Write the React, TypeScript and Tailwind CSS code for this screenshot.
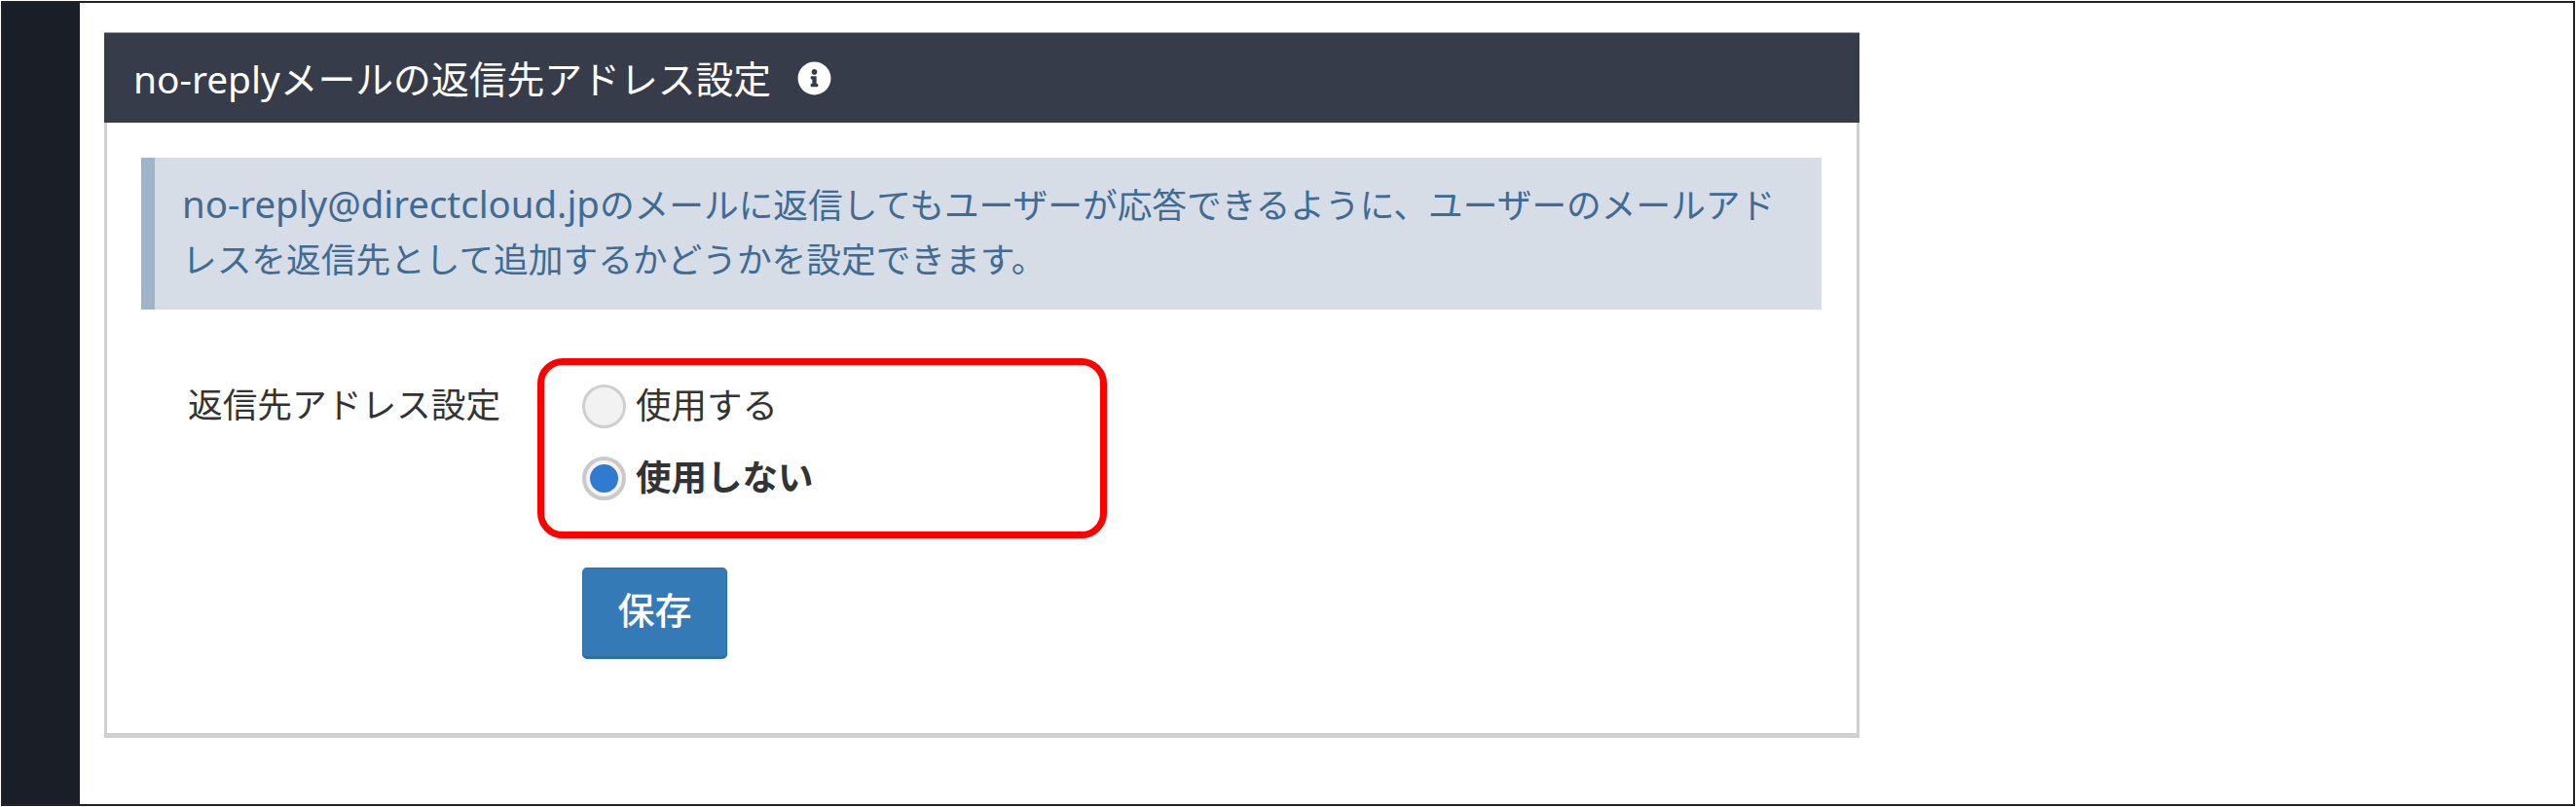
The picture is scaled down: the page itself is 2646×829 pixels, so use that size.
import React from "react";
import { FaInfoCircle } from "react-icons/fa";

function Radio({ checked, label }: { checked?: boolean; label: string }) {
  return (
    <div className="flex items-center h-[45px]">
      {checked ? (
        <span className="w-[45px] h-[45px] rounded-full bg-[#f4f4f4] border-[4px] border-[#cacaca] flex items-center justify-center shrink-0">
          <span className="w-[29px] h-[29px] rounded-full bg-[#2f7bd0]" />
        </span>
      ) : (
        <span className="w-[45px] h-[45px] rounded-full bg-[#f2f2f2] border-[3px] border-[#cfcfcf] shrink-0" />
      )}
      <span className={"ml-[10px] pb-[3px] text-[36.5px] leading-[45px] text-[#333] " + (checked ? "font-bold" : "")}>{label}</span>
    </div>
  );
}

export default function App() {
  return (
    <div className="w-[2646px] h-[829px] bg-white p-px font-['Noto_Sans','Noto_Sans_CJK_JP',sans-serif] overflow-hidden">
      <div className="w-[2644px] h-[827px] border-2 border-[#222] flex">
        <aside className="w-[79px] h-full bg-[#1a1e26] shrink-0" />
        <main className="pt-[30px] pl-[25px]">
          <div className="relative w-[1803px]">
            <header className="h-[93px] bg-[#363c4a] flex items-center pl-[30px] border-t border-[#9a9ea6]">
              <h1 className="pt-[2px] text-[38.8px] leading-[44px] font-normal text-white whitespace-nowrap">no-replyメールの返信先アドレス設定</h1>
              <FaInfoCircle className="ml-[27px] text-white w-[35px] h-[35px]" />
            </header>
            <div className="h-[632px] border-x-[3px] border-b-[5px] border-[#d0d0d0] pt-[36px] pl-[35px] pr-[36px]">
              <div className="h-[156px] bg-[#d6dde7] border-l-[14px] border-[#9db4c9] pl-[28px] pt-[21px] text-[35.7px] leading-[53px] text-[#3f6b94]">
                <p className="whitespace-nowrap"><span className="text-[38.4px]">no-reply@directcloud.jp</span>のメールに返信してもユーザーが応答できるように、ユーザーのメールアド</p>
                <p className="mt-[3px] whitespace-nowrap">レスを返信先として追加するかどうかを設定できます。</p>
              </div>
              <div className="flex mt-[77px]">
                <label className="w-[453px] pl-[48px] pb-[3px] text-[35.7px] leading-[41px] text-[#333] whitespace-nowrap">返信先アドレス設定</label>
                <div className="flex flex-col">
                  <div className="flex flex-col gap-[29px]">
                    <Radio label="使用する" />
                    <Radio checked label="使用しない" />
                  </div>
                  <button className="mt-[69px] w-[149px] h-[94px] rounded-[5px] bg-[#337ab7] border border-[#2e6da4] border-b-[3px] pb-[6px] text-white text-[38px] font-medium leading-none">保存</button>
                </div>
              </div>
            </div>
            <div className="absolute left-[445px] top-[335px] w-[585px] h-[185px] border-[7px] border-[#ff0000] rounded-[26px]" />
          </div>
        </main>
      </div>
    </div>
  );
}
